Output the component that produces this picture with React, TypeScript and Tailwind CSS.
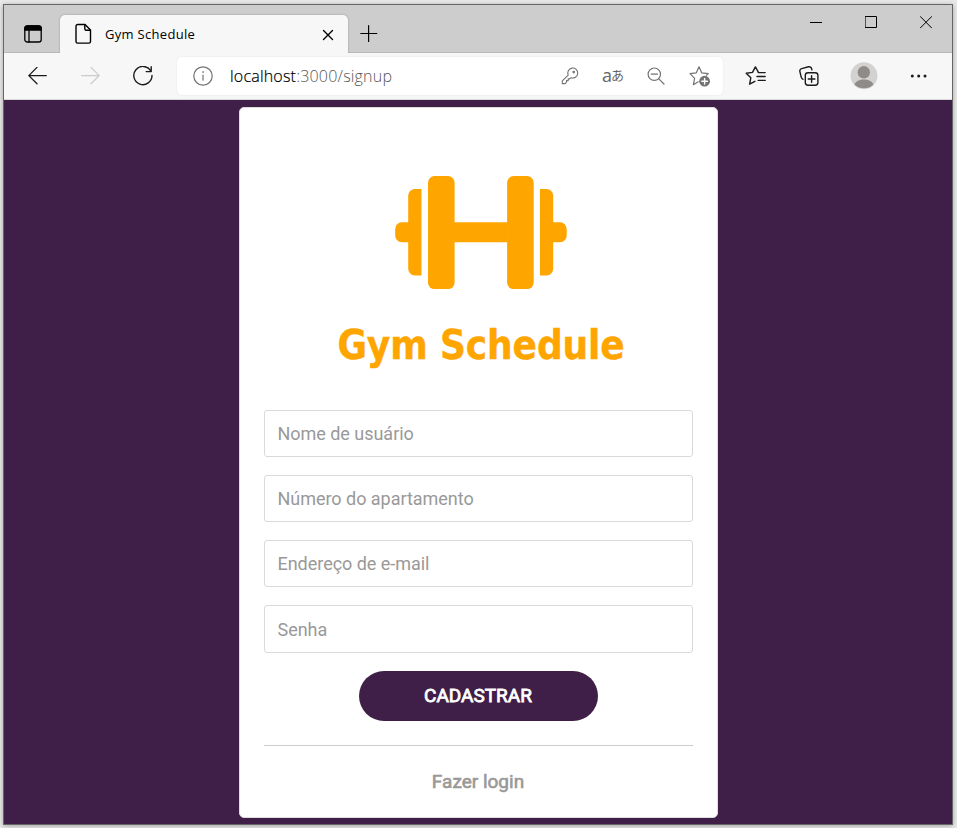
import React from "react";

const stroke = {
  fill: "none",
  stroke: "currentColor",
  strokeLinecap: "round" as const,
  strokeLinejoin: "round" as const,
};

function TabStrip() {
  return (
    <div className="flex h-[48px] border-b border-[#b9b9b9] bg-[#cdcdcd]">
      <div className="flex w-[56px] pl-[20px] pt-[20px]">
        <svg width="18" height="18" viewBox="0 0 18 18" {...stroke} strokeWidth="1.3">
          <rect x="0.8" y="0.8" width="16.4" height="16.2" rx="2.6" />
          <path d="M.8 5V3.4A2.6 2.6 0 0 1 3.4.8h11.2a2.6 2.6 0 0 1 2.6 2.6V5z" fill="currentColor" />
          <path d="M5 5v12" />
        </svg>
      </div>
      <div className="mt-[10px] flex h-[38px] w-[288px] rounded-t-[5px] bg-[#f7f7f7] shadow-[0_0_2px_rgba(0,0,0,0.3)] [clip-path:inset(-3px_-3px_0_-3px)]">
        <svg className="ml-[15px] mt-[8px] shrink-0" width="17" height="22" viewBox="0 0 17 22" {...stroke} strokeWidth="1.4">
          <path d="M1 3.2A1.7 1.7 0 0 1 2.7 1.5H10l5.5 5.6v11.3a1.7 1.7 0 0 1-1.7 1.7H2.7A1.7 1.7 0 0 1 1 18.4z" />
          <path d="M9.8 1.7v4a1.5 1.5 0 0 0 1.5 1.5h4" />
        </svg>
        <span className="ml-[13px] mt-[9px] w-[217px] whitespace-nowrap font-['Open_Sans',sans-serif] text-[13px] leading-[20px] tracking-[0.3px] text-black">
          Gym Schedule
        </span>
        <svg className="mt-[14px] shrink-0" width="12" height="12" viewBox="0 0 12 12" {...stroke} strokeWidth="1.4">
          <path d="M1.5 1.5l9 9M10.5 1.5l-9 9" />
        </svg>
      </div>
      <svg className="ml-[12px] mt-[20px]" width="18" height="18" viewBox="0 0 18 18" {...stroke} strokeWidth="1.2">
        <path d="M.8 8.5h16M8.6.7v15.8" />
      </svg>
      <div className="ml-auto flex pr-[20px] pt-[11px]">
        <svg width="12" height="13" viewBox="0 0 12 13" {...stroke} strokeWidth="1">
          <path d="M0 6.5h12" strokeLinecap="butt" />
        </svg>
        <svg className="ml-[43px]" width="12" height="13" viewBox="0 0 12 13" {...stroke} strokeWidth="1" strokeLinejoin="miter">
          <path d="M.5.5h11v11H.5z" />
        </svg>
        <svg className="ml-[43px]" width="12" height="13" viewBox="0 0 12 13" {...stroke} strokeWidth="1">
          <path d="M.3.5l11.4 11.5M11.7.5L.3 12" />
        </svg>
      </div>
    </div>
  );
}

function AddressBar() {
  return (
    <div className="flex h-[38px] w-[546px] items-center rounded-[5px] bg-white pl-[16px] text-[#737373] shadow-[0_0_2px_rgba(0,0,0,0.08)]">
      <svg width="20" height="20" viewBox="0 0 20 20" {...stroke} strokeWidth="1.2">
        <circle cx="10" cy="10" r="9.2" />
        <path d="M10 9v5.2" />
        <circle cx="10" cy="6" r=".5" fill="currentColor" strokeWidth=".6" />
      </svg>
      <span className="ml-[17px] w-[331px] whitespace-nowrap font-['Open_Sans',sans-serif] text-[16px] font-light leading-[24px] tracking-[0.2px] text-[#555]">
        <span className="text-black [-webkit-text-stroke:0.2px_black]">localhost</span>:3000/signup
      </span>
      <svg className="shrink-0" width="18" height="18" viewBox="0 0 18 18" {...stroke} strokeWidth="1.1">
        <path d="M7.2 8.1A5 5 0 1 1 10 10.7l-1.3 1.2H7.2v1.7H5.5v1.6l-1.4 1.4H1.3v-2.8z" />
        <circle cx="12.7" cy="5.1" r=".8" />
      </svg>
      <span className="ml-[23px] flex h-[18px] w-[24px] shrink-0 items-center whitespace-nowrap pb-[2px] text-[#666]">
        <span className="font-['Open_Sans',sans-serif] text-[18px] leading-[18px]">a</span>
        <span className="-ml-px font-['Noto_Sans_CJK_JP',sans-serif] text-[13px] leading-[16px]">あ</span>
      </span>
      <svg className="ml-[21px] shrink-0" width="18" height="18" viewBox="0 0 18 18" {...stroke} strokeWidth="1.2">
        <circle cx="7.3" cy="7.2" r="6.2" />
        <path d="M4.2 7.2h6.3M11.8 11.8l5.2 5.2" />
      </svg>
      <svg className="ml-[24px] shrink-0" width="22" height="22" viewBox="0 0 22 22" {...stroke} strokeWidth="1.2">
        <path d="M9.2 16.8l-4.8 2.9 1.2-6.3L1 8.7l6.2-.8L10 1.8l2.8 6.1 6.4.8-1.7 1.7" />
        <circle cx="15.6" cy="16.2" r="5.4" fill="currentColor" stroke="none" />
        <path d="M15.6 13.4V19M12.8 16.2h5.6" stroke="white" strokeWidth="1.4" />
      </svg>
    </div>
  );
}

function Toolbar() {
  return (
    <div className="flex h-[47px] items-center border-b border-[#d9d9d9] bg-[#f7f7f7] text-[#1b1b1b]">
      <svg className="ml-[24px]" width="19" height="18" viewBox="0 0 19 18" {...stroke} strokeWidth="1.3">
        <path d="M18.3 8.6H.8M9 .4L.8 8.6 9 16.8" />
      </svg>
      <svg className="ml-[34px] text-[#cccccc]" width="19" height="18" viewBox="0 0 19 18" {...stroke} strokeWidth="1.3">
        <path d="M.5 8.6h17.7M10 .4l8.2 8.2-8.2 8.2" />
      </svg>
      <svg className="ml-[33px]" width="20" height="20" viewBox="0 0 20 20" {...stroke} strokeWidth="1.4">
        <path d="M17.8 5A9.1 9.1 0 1 0 19 9.4M18.2.8v4.8h-5" />
      </svg>
      <div className="ml-[24px]">
        <AddressBar />
      </div>
      <svg className="ml-[22px]" width="22" height="20" viewBox="0 0 22 20" {...stroke} strokeWidth="1.4">
        <path d="M13.2 5.9L10.4.9 7.5 6.4l-6.3.9 4.6 4.5-1.2 6.3 5.3-2.8" />
        <path d="M13.2 6.6h7M12 10.5h8.2M13.2 14.4h7" />
      </svg>
      <svg className="ml-[32px]" width="20" height="20" viewBox="0 0 20 20" {...stroke} strokeWidth="1.4">
        <rect x="6.3" y="6.8" width="12.6" height="12.4" rx="2.7" />
        <path d="M12.6 9.7v6.6M9.3 13h6.6" />
        <path d="M4 13.3a3 3 0 0 1-1.8-2.1L.9 5.7a2.5 2.5 0 0 1 1.8-3.1L9.5.8a2.5 2.5 0 0 1 3.1 1.8l.3 1.2" />
      </svg>
      <svg className="ml-[31px]" width="28" height="28" viewBox="0 0 28 28">
        <circle cx="14" cy="13.7" r="13.5" fill="#d3d2d0" />
        <circle cx="13.8" cy="10.3" r="6.2" fill="#8f8b88" />
        <path d="M4.5 22.5c1.3-3.2 5-5 9.4-5s8.2 1.8 9.5 5a13.5 13.5 0 0 1-18.9 0z" fill="#8f8b88" />
      </svg>
      <svg className="ml-[32px]" width="18" height="4" viewBox="0 0 18 4" fill="currentColor">
        <circle cx="2.3" cy="2" r="1.5" />
        <circle cx="8.7" cy="2" r="1.5" />
        <circle cx="15" cy="2" r="1.5" />
      </svg>
    </div>
  );
}

function Dumbbell() {
  return (
    <svg width="174" height="114" viewBox="-0.7 0.5 174 114" fill="#ffa500">
      <rect x="33.3" y="0.6" width="26.6" height="113" rx="6.6" />
      <rect x="112.4" y="0.6" width="26.6" height="113" rx="6.6" />
      <path d="M59 46.8h54v20H59z" />
      <path d="M26.8 13.5v86.4h-6.7a6.6 6.6 0 0 1-6.6-6.6V66.8H7.1A6.6 6.6 0 0 1 .5 60.2v-6.8a6.6 6.6 0 0 1 6.6-6.6h6.4V20.1a6.6 6.6 0 0 1 6.6-6.6z" />
      <path d="M145.2 13.5v86.4h6.7a6.6 6.6 0 0 0 6.6-6.6V66.8h6.9a6.6 6.6 0 0 0 6.6-6.6v-6.8a6.6 6.6 0 0 0-6.6-6.6h-6.9V20.1a6.6 6.6 0 0 0-6.6-6.6z" />
    </svg>
  );
}

const fieldClass =
  "block h-[47px] w-full rounded-[3px] border border-[#d9d9d9] bg-white px-[13px] text-[18px] tracking-[-0.03px] text-black outline-none placeholder:text-[#999999]";

function SignupCard() {
  return (
    <form className="flex h-[711px] w-[479px] flex-col items-center rounded-[5px] border border-[#dddddd] bg-white px-[24px] font-['Roboto',sans-serif]">
      <div className="ml-[5px] mt-[68px]">
        <Dumbbell />
      </div>
      <h1 className="ml-[6px] mt-[30px] whitespace-nowrap font-['DejaVu_Sans_Condensed','DejaVu_Sans',sans-serif] text-[40px] font-bold leading-[50px] tracking-[-0.1px] text-[#ffa500] [-webkit-text-stroke:0.4px_#ffa500] [font-stretch:condensed]">
        Gym Schedule
      </h1>
      <div className="mt-[40px] flex w-full flex-col gap-[18px]">
        <input className={fieldClass} placeholder="Nome de usuário" />
        <input className={fieldClass} placeholder="Número do apartamento" />
        <input className={fieldClass} placeholder="Endereço de e-mail" />
        <input className={fieldClass + " h-[48px]"} placeholder="Senha" />
      </div>
      <button
        type="button"
        className="mt-[18px] h-[50px] w-[239px] shrink-0 rounded-full bg-[#3f1f47] text-[19px] leading-[50px] text-white [-webkit-text-stroke:0.8px_white]"
      >
        CADASTRAR
      </button>
      <div className="mt-[24px] w-full border-t border-[#cccccc]" />
      <a className="mt-[24px] text-[19px] leading-[24px] text-[#999999] [-webkit-text-stroke:0.6px_#999999]">Fazer login</a>
    </form>
  );
}

export default function App() {
  return (
    <div className="h-[828px] w-[957px] overflow-hidden bg-[#e9e9e9] pl-[3px] pt-[4px]">
      <div className="flex h-[821px] w-[950px] flex-col border border-[#666666] bg-[#3f1f47] text-black shadow-[0_1px_5px_rgba(0,0,0,0.3)]">
        <TabStrip />
        <Toolbar />
        <main className="flex justify-center pt-[7px]">
          <SignupCard />
        </main>
      </div>
    </div>
  );
}
